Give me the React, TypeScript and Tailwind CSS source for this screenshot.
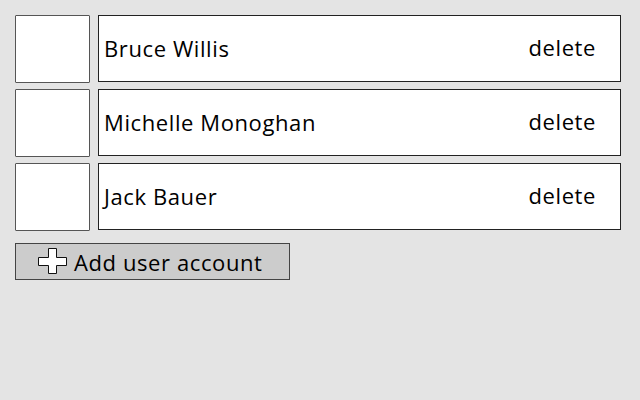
const users = ["Bruce Willis", "Michelle Monoghan", "Jack Bauer"];

function PlusIcon() {
  return (
    <svg width="30" height="27" viewBox="0 0 30 27" className="shrink-0">
      <path
        d="M10.5 0.5 H18.5 V9.5 H28.5 V17.5 H18.5 V25.5 H10.5 V17.5 H0.5 V9.5 H10.5 Z"
        fill="#fff"
        stroke="#111"
        strokeWidth="1"
      />
    </svg>
  );
}

export default function App() {
  return (
    <div
      className="w-[640px] h-[400px] bg-[#e4e4e4] pt-[15px] pl-[15px] text-black"
      style={{ fontFamily: '"Open Sans", "Noto Sans", sans-serif' }}
    >
      <div className="flex flex-col gap-[6px]">
        {users.map((name) => (
          <div key={name} className="flex gap-[8px] h-[68px]">
            <div className="w-[75px] h-[68px] bg-white border border-[#555] rounded-[1px]" />
            <div className="w-[523px] h-[67px] bg-white border border-[#222] flex items-center justify-between pl-[5px] pr-[24px] pb-[1px]">
              <span className="text-[22px] leading-none tracking-[0.6px]">{name}</span>
              <span className="text-[22px] leading-none tracking-[0.6px] -mt-[3px]">delete</span>
            </div>
          </div>
        ))}
      </div>

      <button className="mt-[12px] w-[275px] h-[37px] bg-[#cccccc] border border-[#444] flex items-center pl-[22px] gap-[6px]">
        <PlusIcon />
        <span className="text-[22px] leading-none tracking-[0.6px]">Add user account</span>
      </button>
    </div>
  );
}
